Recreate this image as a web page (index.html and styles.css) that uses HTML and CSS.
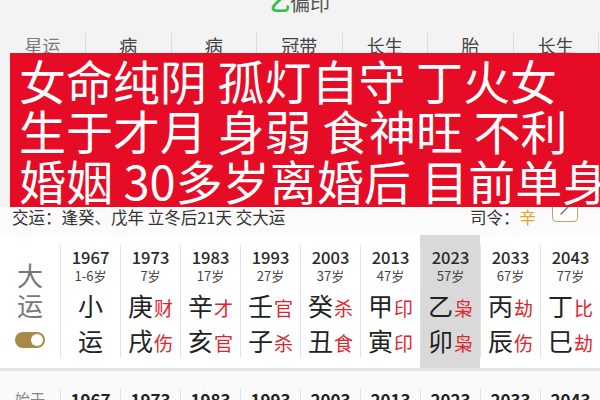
FILE: index.html
```html
<!DOCTYPE html>
<html lang="zh">
<head>
<meta charset="utf-8">
<link rel="stylesheet" href="styles.css">
</head>
<body>
<div class="page">
  <div class="top"><span class="top-title"><span class="green">乙</span>偏印</span></div>
  <div class="xingyun">
    <div class="xy-label">星运</div>
    <div class="xy-cell">病</div>
    <div class="xy-cell">病</div>
    <div class="xy-cell">冠带</div>
    <div class="xy-cell">长生</div>
    <div class="xy-cell">胎</div>
    <div class="xy-cell">长生</div>
    <div class="xy-cell"></div>
  </div>
  <div class="info">
    <div class="jiaoyun">交运：逢癸、戊年 立冬后21天 交大运</div>
    <div class="siling">司令：<span class="orange">辛</span>
      <span class="edit-btn"><svg width="14" height="14" viewBox="0 0 14 14"><path d="M3 11 L11 3" stroke="#8a7350" stroke-width="1.5" fill="none" stroke-linecap="round"/></svg></span>
    </div>
  </div>
  <div class="dayun">
    <div class="dy-label"><span class="dy-l">大</span><span class="dy-l">运</span><span class="toggle"></span></div>
    <div class="dy-col"><div class="dy-inner"><div class="year">1967</div><div class="age">1-6岁</div><div class="gz first"><span class="big">小</span></div><div class="gz"><span class="big">运</span></div></div></div>
    <div class="dy-col"><div class="dy-inner"><div class="year">1973</div><div class="age">7岁</div><div class="gz first"><span class="big">庚</span><span class="red">财</span></div><div class="gz"><span class="big">戌</span><span class="red">伤</span></div></div></div>
    <div class="dy-col"><div class="dy-inner"><div class="year">1983</div><div class="age">17岁</div><div class="gz first"><span class="big">辛</span><span class="red">才</span></div><div class="gz"><span class="big">亥</span><span class="red">官</span></div></div></div>
    <div class="dy-col"><div class="dy-inner"><div class="year">1993</div><div class="age">27岁</div><div class="gz first"><span class="big">壬</span><span class="red">官</span></div><div class="gz"><span class="big">子</span><span class="red">杀</span></div></div></div>
    <div class="dy-col"><div class="dy-inner"><div class="year">2003</div><div class="age">37岁</div><div class="gz first"><span class="big">癸</span><span class="red">杀</span></div><div class="gz"><span class="big">丑</span><span class="red">食</span></div></div></div>
    <div class="dy-col"><div class="dy-inner"><div class="year">2013</div><div class="age">47岁</div><div class="gz first"><span class="big">甲</span><span class="red">印</span></div><div class="gz"><span class="big">寅</span><span class="red">印</span></div></div></div>
    <div class="dy-col cur"><div class="dy-inner"><div class="year">2023</div><div class="age">57岁</div><div class="gz first"><span class="big">乙</span><span class="red">枭</span></div><div class="gz"><span class="big">卯</span><span class="red">枭</span></div></div></div>
    <div class="dy-col"><div class="dy-inner"><div class="year">2033</div><div class="age">67岁</div><div class="gz first"><span class="big">丙</span><span class="red">劫</span></div><div class="gz"><span class="big">辰</span><span class="red">伤</span></div></div></div>
    <div class="dy-col"><div class="dy-inner"><div class="year">2043</div><div class="age">77岁</div><div class="gz first"><span class="big">丁</span><span class="red">比</span></div><div class="gz"><span class="big">巳</span><span class="red">劫</span></div></div></div>
  </div>
  <div class="sep"></div>
  <div class="qiyun">
    <div class="qy-label">始于</div>
    <div class="qy-cell">1967</div>
    <div class="qy-cell">1973</div>
    <div class="qy-cell">1983</div>
    <div class="qy-cell">1993</div>
    <div class="qy-cell">2003</div>
    <div class="qy-cell">2013</div>
    <div class="qy-cell">2023</div>
    <div class="qy-cell">2033</div>
    <div class="qy-cell">2043</div>
  </div>
  <div class="banner">女命纯阴 孤灯自守 丁火女<br>生于才月 身弱 食神旺 不利<br>婚姻 30多岁离婚后 目前单身</div>
</div>
</body>
</html>
```
FILE: styles.css
```css
body {
  margin: 0;
  background: #f7f7f7;
  font-family: "Noto Sans CJK SC", "Noto Sans", sans-serif;
  color: #333;
}
.page {
  position: relative;
  width: 600px;
  height: 400px;
  overflow: hidden;
}
.top {
  height: 33px;
  display: flex;
  justify-content: center;
  background: #f3f3f3;
}
.top-title {
  font-size: 20px;
  line-height: 20px;
  margin-top: -7px;
  color: #555;
}
.green {
  color: #2fbf45;
  font-weight: 700;
}
.xingyun {
  height: 174px;
  display: grid;
  grid-template-columns: 85px repeat(7, 85.5px);
  align-content: start;
  background: #f3f3f3;
}
.xy-label,
.xy-cell {
  height: 40px;
  font-size: 18px;
  line-height: 24px;
  text-align: center;
}
.xy-label {
  color: #7a7a7a;
}
.xy-cell {
  border-left: 1px solid #dcdcdc;
  color: #444;
}
.info {
  height: 28px;
  display: flex;
  justify-content: space-between;
  align-items: flex-start;
  padding: 0 22px 0 12px;
  font-size: 16.5px;
  line-height: 20px;
  color: #333;
  background: #fbfbfb;
}
.siling {
  display: flex;
  align-items: flex-start;
}
.orange {
  color: #e8a025;
}
.edit-btn {
  width: 24px;
  height: 22px;
  margin: -9px 0 0 16px;
  border: 1.5px solid #c2a06a;
  border-radius: 4px;
  display: flex;
  align-items: center;
  justify-content: center;
  background: #fff;
}
.dayun {
  height: 133px;
  display: grid;
  grid-template-columns: repeat(10, 60px);
  background: #fff;
}
.dy-label {
  display: flex;
  flex-direction: column;
  align-items: center;
  padding-top: 25px;
}
.dy-l {
  font-size: 26px;
  line-height: 30px;
  color: #777;
}
.toggle {
  position: relative;
  width: 30px;
  height: 16px;
  margin-top: 12px;
  border-radius: 8px;
  background: #a88a48;
}
.toggle::after {
  content: "";
  position: absolute;
  right: 2px;
  top: 2px;
  width: 12px;
  height: 12px;
  border-radius: 50%;
  background: #fff;
}
.dy-col {
  padding: 10px 0;
}
.dy-col.cur {
  background: #d9d9d9;
}
.dy-inner {
  height: 100%;
  box-sizing: border-box;
  border-left: 1px solid #e2e2e2;
  padding-top: 2px;
  text-align: center;
}
.year {
  font-size: 16.5px;
  line-height: 20px;
  color: #2a2a2a;
  font-weight: 500;
}
.age {
  font-size: 13px;
  line-height: 18px;
  color: #444;
}
.gz {
  height: 30px;
  line-height: 30px;
  margin-top: 5px;
  white-space: nowrap;
}
.big {
  font-size: 25px;
  color: #222;
}
.red {
  font-size: 19px;
  color: #e0242c;
  margin-left: 1px;
}
.sep {
  height: 3px;
  background: #e6e6e6;
}
.qiyun {
  display: grid;
  grid-template-columns: repeat(10, 60px);
  padding-top: 18px;
  background: #fafafa;
}
.qy-label {
  font-size: 15px;
  line-height: 20px;
  color: #888;
  text-align: center;
}
.qy-cell {
  border-left: 1px solid #e2e2e2;
  font-size: 17px;
  line-height: 22px;
  font-weight: 700;
  color: #222;
  text-align: center;
}
.banner {
  position: absolute;
  left: 10px;
  top: 53px;
  width: 620px;
  height: 154px;
  box-sizing: border-box;
  padding: 2px 0 0 9px;
  background: #e60c25;
  color: #fff;
  font-size: 47px;
  line-height: 50px;
  font-weight: 400;
  white-space: nowrap;
}
```
